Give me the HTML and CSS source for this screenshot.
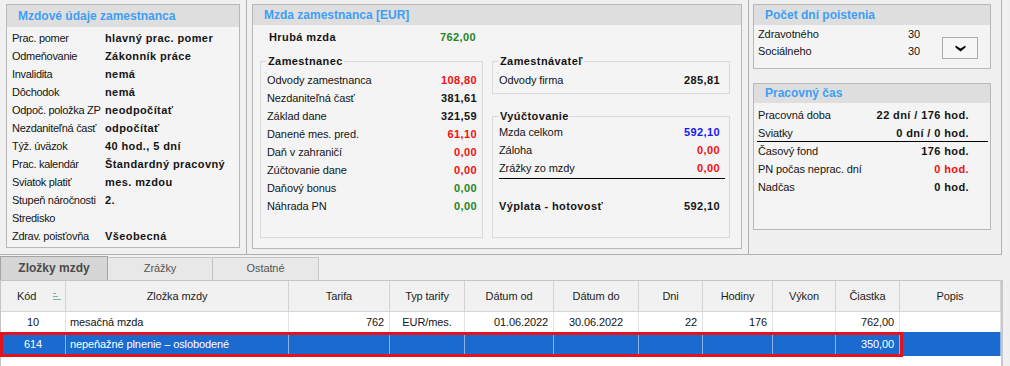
FILE: index.html
```html
<!DOCTYPE html>
<html lang="sk">
<head>
    <meta charset="UTF-8">
    <title>Mzda zamestnanca</title>
    <link rel="stylesheet" href="styles.css">
</head>
<body>
    <div class="top">
        <div class="col col-1">
            <section class="box box-emp">
                <h2 class="box-title">Mzdové údaje zamestnanca</h2>
                <div class="kv-list">
                    <div class="kv"><span class="k">Prac. pomer</span><span class="v">hlavný prac. pomer</span></div>
                    <div class="kv"><span class="k">Odmeňovanie</span><span class="v">Zákonník práce</span></div>
                    <div class="kv"><span class="k">Invalidita</span><span class="v">nemá</span></div>
                    <div class="kv"><span class="k">Dôchodok</span><span class="v">nemá</span></div>
                    <div class="kv"><span class="k">Odpoč. položka ZP</span><span class="v">neodpočítať</span></div>
                    <div class="kv"><span class="k">Nezdaniteľná časť</span><span class="v">odpočítať</span></div>
                    <div class="kv"><span class="k">Týž. úväzok</span><span class="v">40 hod., 5 dní</span></div>
                    <div class="kv"><span class="k">Prac. kalendár</span><span class="v">Štandardný pracovný</span></div>
                    <div class="kv"><span class="k">Sviatok platiť</span><span class="v">mes. mzdou</span></div>
                    <div class="kv"><span class="k">Stupeň náročnosti</span><span class="v">2.</span></div>
                    <div class="kv"><span class="k">Stredisko</span><span class="v"></span></div>
                    <div class="kv"><span class="k">Zdrav. poisťovňa</span><span class="v">Všeobecná</span></div>
                </div>
            </section>
        </div>

        <div class="col col-2">
            <section class="box box-wage">
                <h2 class="box-title">Mzda zamestnanca [EUR]</h2>
                <div class="gross"><span>Hrubá mzda</span><span class="green">762,00</span></div>
                <div class="wage-grid">
                    <fieldset class="group group-emp">
                        <legend>Zamestnanec</legend>
                        <div class="row"><span>Odvody zamestnanca</span><b class="red">108,80</b></div>
                        <div class="row"><span>Nezdaniteľná časť</span><b>381,61</b></div>
                        <div class="row"><span>Základ dane</span><b>321,59</b></div>
                        <div class="row"><span>Danené mes. pred.</span><b class="red">61,10</b></div>
                        <div class="row"><span>Daň v zahraničí</span><b class="red">0,00</b></div>
                        <div class="row"><span>Zúčtovanie dane</span><b class="red">0,00</b></div>
                        <div class="row"><span>Daňový bonus</span><b class="green">0,00</b></div>
                        <div class="row"><span>Náhrada PN</span><b class="green">0,00</b></div>
                    </fieldset>
                    <div class="wage-right">
                        <fieldset class="group group-firm">
                            <legend>Zamestnávateľ</legend>
                            <div class="row"><span>Odvody firma</span><b>285,81</b></div>
                        </fieldset>
                        <fieldset class="group group-settle">
                            <legend>Vyúčtovanie</legend>
                            <div class="row"><span>Mzda celkom</span><b class="blue">592,10</b></div>
                            <div class="row"><span>Záloha</span><b class="red">0,00</b></div>
                            <div class="row"><span>Zrážky zo mzdy</span><b class="red">0,00</b></div>
                            <div class="rule"></div>
                            <div class="row total"><b>Výplata - hotovosť</b><b>592,10</b></div>
                        </fieldset>
                    </div>
                </div>
            </section>
        </div>

        <div class="col col-3">
            <section class="box box-days">
                <h2 class="box-title">Počet dní poistenia</h2>
                <div class="days-body">
                    <div class="days-list">
                        <div class="day"><span class="k">Zdravotného</span><span>30</span></div>
                        <div class="day"><span class="k">Sociálneho</span><span>30</span></div>
                    </div>
                    <button class="drop-btn" type="button">
                        <svg width="11" height="7" viewBox="0 0 11 7"><path d="M0.5 0.5 L5.5 3.6 L10.5 0.5 L10.5 2.4 L5.5 6.5 L0.5 2.4 Z" fill="#000"/></svg>
                    </button>
                </div>
            </section>
            <section class="box box-time">
                <h2 class="box-title">Pracovný čas</h2>
                <div class="time-list">
                    <div class="trow"><span>Pracovná doba</span><b>22 dní / 176 hod.</b></div>
                    <div class="trow short"><span>Sviatky</span><b>0 dní / 0 hod.</b></div>
                    <div class="rule"></div>
                    <div class="trow short"><span>Časový fond</span><b>176 hod.</b></div>
                    <div class="trow gap"><span>PN počas neprac. dní</span><b class="red">0 hod.</b></div>
                    <div class="trow"><span>Nadčas</span><b>0 hod.</b></div>
                </div>
            </section>
        </div>
    </div>

    <div class="tabs">
        <div class="tab active">Zložky mzdy</div>
        <div class="tab tab-2">Zrážky</div>
        <div class="tab tab-3">Ostatné</div>
    </div>

    <div class="grid">
        <div class="grid-row head">
            <div class="cell kod-head">Kód
                <svg class="sort" width="8" height="7" viewBox="0 0 8 7"><rect x="0" y="0" width="3" height="1" fill="#7db3a6"/><rect x="0" y="3" width="5" height="1" fill="#7db3a6"/><rect x="0" y="6" width="8" height="1" fill="#7db3a6"/></svg>
            </div>
            <div class="cell c">Zložka mzdy</div>
            <div class="cell c">Tarifa</div>
            <div class="cell c">Typ tarify</div>
            <div class="cell c">Dátum od</div>
            <div class="cell c">Dátum do</div>
            <div class="cell c">Dni</div>
            <div class="cell c">Hodiny</div>
            <div class="cell c">Výkon</div>
            <div class="cell c">Čiastka</div>
            <div class="cell c">Popis</div>
        </div>
        <div class="grid-row">
            <div class="cell c">10</div>
            <div class="cell l">mesačná mzda</div>
            <div class="cell r">762</div>
            <div class="cell c">EUR/mes.</div>
            <div class="cell r">01.06.2022</div>
            <div class="cell c">30.06.2022</div>
            <div class="cell r">22</div>
            <div class="cell r">176</div>
            <div class="cell r"></div>
            <div class="cell r">762,00</div>
            <div class="cell l"></div>
        </div>
        <div class="grid-row selected">
            <div class="cell c">614</div>
            <div class="cell l">nepeňažné plnenie – oslobodené</div>
            <div class="cell r"></div>
            <div class="cell c"></div>
            <div class="cell r"></div>
            <div class="cell c"></div>
            <div class="cell r"></div>
            <div class="cell r"></div>
            <div class="cell r"></div>
            <div class="cell r">350,00</div>
            <div class="cell l"></div>
        </div>
        <div class="sel-frame"></div>
    </div>
</body>
</html>
```

FILE: styles.css
```css
* {
    margin: 0;
    padding: 0;
    box-sizing: border-box;
}

body {
    font-family: "Liberation Sans", Arial, sans-serif;
    font-size: 11px;
    letter-spacing: -0.1px;
    color: #141414;
    background: #f0f0f0;
    width: 1010px;
    height: 366px;
    overflow: hidden;
}

b,
.v {
    font-weight: bold;
    letter-spacing: 0.4px;
}

.red { color: #f20f0f; }
.green { color: #1f861f; }
.blue { color: #1717f5; }

/* top area: three splitter columns */
.top {
    display: flex;
    height: 255px;
}

.col {
    border-right: 1px solid #b0b0b0;
    border-bottom: 1px solid #b0b0b0;
    padding-top: 4px;
}

.col-1 { width: 247px; padding-left: 6px; }
.col-2 { width: 502px; padding-left: 5px; }
.col-3 { width: 253px; padding-left: 4px; }

.box {
    background: #f4f4f4;
    border: 1px solid #b8b8b8;
}

.box-title {
    font-size: 12px;
    font-weight: bold;
    letter-spacing: 0;
    color: #3f9ef5;
    background: #dedede;
    height: 20px;
    line-height: 20px;
    padding-left: 11px;
}

/* Mzdové údaje */
.box-emp {
    width: 234px;
    height: 244px;
}

.box-emp .box-title {
    height: 22px;
    line-height: 22px;
}

.kv-list {
    padding: 2px 0 0 5px;
}

.kv {
    display: flex;
    align-items: center;
    height: 18px;
    white-space: nowrap;
}

.kv .k {
    width: 93px;
    flex: none;
    letter-spacing: -0.3px;
}

/* Mzda zamestnanca */
.box-wage {
    width: 490px;
    height: 245px;
}

.gross {
    display: flex;
    justify-content: space-between;
    align-items: center;
    width: 207px;
    height: 18px;
    margin: 3px 0 0 16px;
    font-weight: bold;
    letter-spacing: 0.4px;
}

.wage-grid {
    display: flex;
    gap: 9px;
    padding-left: 7px;
    margin-top: 8px;
}

.group {
    border: 1px solid #d9d9d9;
    padding: 3px 5px 22px 6px;
}

.group legend {
    font-weight: bold;
    letter-spacing: 0.4px;
    line-height: 14px;
    padding: 0 1px;
}

.group-emp { width: 223px; }

.wage-right { width: 238px; }

.group-firm {
    padding: 3px 4px 4px 6px;
}

.group-settle {
    margin-top: 15px;
    padding: 0 4px 22px 6px;
}

.row {
    display: flex;
    justify-content: space-between;
    align-items: center;
    height: 18px;
    white-space: nowrap;
}

.wage-right .row { padding-right: 5px; }

.rule {
    height: 1px;
    background: #000;
}

.group-settle .rule { margin-top: 1px; }

.row.total { margin-top: 18px; }

/* Počet dní poistenia */
.box-days {
    width: 238px;
    height: 65px;
}

.days-body {
    display: flex;
}

.days-list {
    width: 188px;
    padding-left: 4px;
}

.day {
    display: flex;
    align-items: center;
    height: 17px;
}

.day .k { width: 150px; }

.drop-btn {
    width: 36px;
    height: 22px;
    margin-top: 12px;
    background: #f6f6f6;
    border: 1px solid #adadad;
    display: flex;
    align-items: center;
    justify-content: center;
}

/* Pracovný čas */
.box-time {
    width: 238px;
    height: 147px;
    margin-top: 14px;
}

.box-time .box-title {
    height: 19px;
    line-height: 19px;
}

.time-list {
    padding-top: 3px;
}

.trow {
    display: flex;
    justify-content: space-between;
    align-items: center;
    height: 18px;
    padding: 0 21px 0 4px;
    white-space: nowrap;
}

.trow.short { height: 17px; }
.trow.gap { margin-top: 1px; }

.time-list .rule { margin: 0 2px 0 3px; }

/* tabs */
.tabs {
    display: flex;
    height: 25px;
    padding-top: 1px;
}

.tab {
    height: 23px;
    margin-top: 1px;
    line-height: 21px;
    text-align: center;
    color: #555;
    background: #e8e8e8;
    border-top: 1px solid #c4c4c4;
    border-right: 1px solid #c4c4c4;
}

.tab.active {
    width: 108px;
    height: 24px;
    margin-top: 0;
    line-height: 22px;
    font-size: 12px;
    font-weight: bold;
    letter-spacing: 0;
    color: #4a4a4a;
    background: #d6d6d6;
    border: 1px solid #a4a4a4;
    border-bottom: none;
}

.tab-2 { width: 105px; }
.tab-3 { width: 106px; }

/* grid */
.grid {
    position: relative;
    width: 1003px;
    height: 86px;
    background: #fff;
    border-top: 1px solid #c4c4c4;
    border-left: 1px solid #c4c4c4;
    border-right: 2px solid #c8c8c8;
}

.grid-row {
    display: grid;
    grid-template-columns: 65px 223px 101px 75px 89px 85px 64px 70px 63px 64px 101px;
    height: 20px;
}

.grid-row.head {
    height: 31px;
    background: #f1f1f1;
    border-bottom: 1px solid #d6d6d6;
    color: #1e1e1e;
}

.cell {
    display: flex;
    align-items: center;
    border-right: 1px solid #e2e2e2;
    white-space: nowrap;
    overflow: hidden;
}

.head .cell { border-right-color: #d4d4d4; }

.cell.c { justify-content: center; }
.cell.r { justify-content: flex-end; padding-right: 5px; }
.cell.l { padding-left: 4px; }

.kod-head {
    padding-left: 16px;
    gap: 17px;
}

.grid-row.selected {
    height: 24px;
    background: #1b6ad0;
    color: #fff;
}

.selected .cell { border-right-color: #8fb2e6; }

.sel-frame {
    position: absolute;
    top: 51px;
    left: -1px;
    width: 903px;
    height: 25px;
    border: 3px solid #e3121c;
}
```
